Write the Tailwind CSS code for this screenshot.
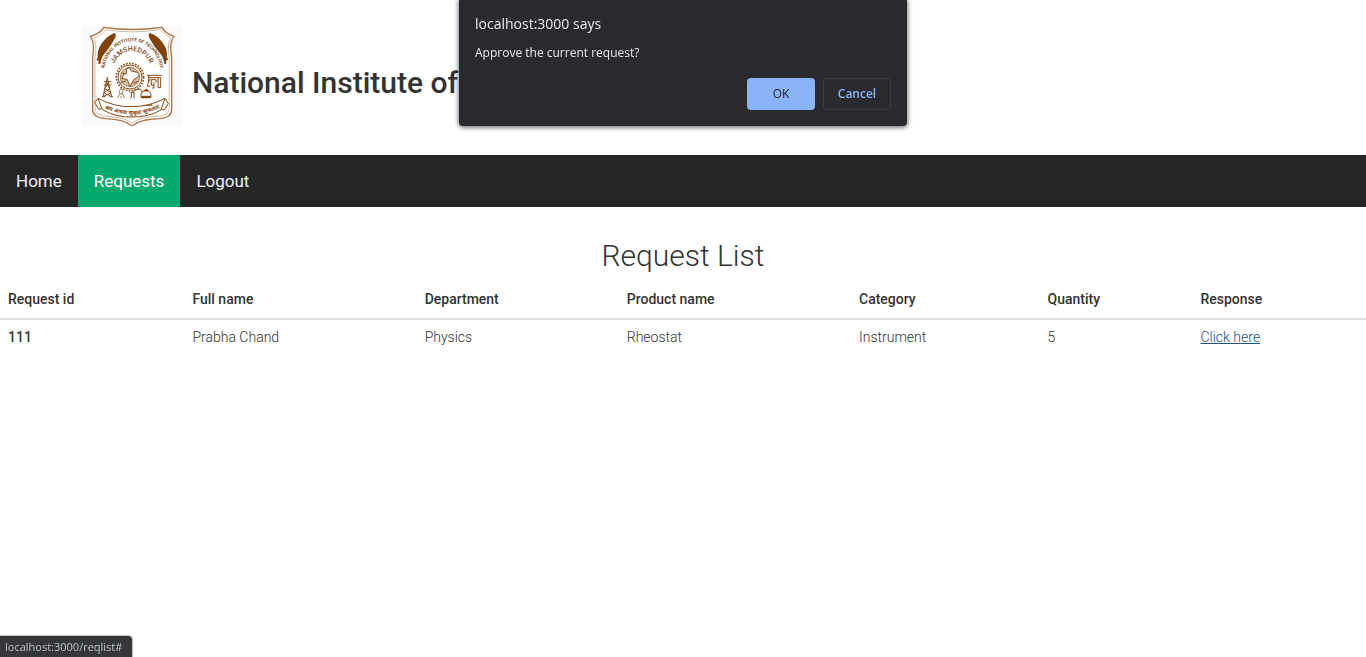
<!DOCTYPE html>
<html lang="en">
<head>
<meta charset="utf-8">
<meta name="viewport" content="width=device-width, initial-scale=1">
<title>Request List</title>
<script src="https://cdn.jsdelivr.net/npm/@tailwindcss/browser@4"></script>
</head>
<body class="min-h-screen bg-white font-['Roboto',sans-serif] text-[#333]">
<header class="flex items-start gap-2.5 pt-[26px] pb-[29px] pl-[82px]">
  <svg class="size-[100px] shrink-0 bg-[#fafafa]" viewBox="18 18 300 300" fill="none" stroke="#8a4b14" role="img" aria-label="National Institute of Technology Jamshedpur">
    <path d="M84 22 Q168 35 258 22 Q267 40 294 49 Q279 66 287 112 L287 270 Q286 293 250 296 Q190 298 168 318 Q146 298 90 296 Q51 293 50 270 L50 112 Q57 66 43 49 Q74 40 84 22Z" fill="#fff" stroke="#aa7548" stroke-width="4"/>
    <path d="M89 29 Q168 42 253 29 Q264 45 284 53 Q273 72 280 112 L280 266 Q279 286 247 289 Q190 291 168 309 Q146 291 93 289 Q58 286 57 266 L57 112 Q64 72 53 53 Q79 45 89 29Z" stroke="#c29a76" stroke-width="2"/>
    <g fill="#84420b" stroke="none">
      <path d="M115 39 Q123 43 116 56 Q104 78 80 108 L75 121 L73 132 L67 131 L68 122 L61 121 L65 112 Q63 91 76 71 Q94 47 115 39Z"/>
      <path d="M222 39 Q214 43 221 56 Q235 81 258 108 L263 120 L265 132 L270 132 L271 121 L277 119 L272 110 Q276 91 262 71 Q246 47 222 39Z"/>
    </g>
    <defs>
      <path id="arcOuter" d="M84 150 C100 35 238 35 254 150"/>
      <path id="arcInner" d="M110 148 C124 75 212 75 226 148"/>
    </defs>
    <g fill="#7b4a24" stroke="none" text-anchor="middle" class="font-['Roboto',sans-serif]">
      <text font-size="14" font-weight="700"><textPath href="#arcOuter" startOffset="50%">NATIONAL INSTITUTE OF TECHNOLOGY</textPath></text>
      <text font-size="21" font-weight="500"><textPath href="#arcInner" startOffset="50%">JAMSHEDPUR</textPath></text>
    </g>
    <circle cx="162" cy="171" r="41" stroke-width="5" stroke-dasharray="5 4"/>
    <circle cx="162" cy="171" r="36" stroke-width="3"/>
    <circle cx="162" cy="171" r="29" fill="#d8bea5" stroke-width="2"/>
    <path d="M151 146 L160 143 L166 153 L184 157 L190 164 L182 174 L174 178 L162 199 L154 179 L138 175 L143 164 L152 158Z" fill="#fff" stroke-width="3"/>
    <path d="M132 190 L149 183 M172 190 L186 184 M137 158 L149 163" stroke-width="3"/>
    <g stroke-width="3">
      <path d="M94 172 L86 207 L81 230 M94 172 L101 207 L107 230 M84 185 H105 M83 195 H106 M90 185 L101 206 L84 218 L104 229 M98 185 L87 206 L105 218 L84 229 M78 230 H88 M101 230 H111"/>
      <path d="M135 205 Q125 216 132 221 Q119 235 130 249 H140 Q151 234 138 221 Q144 214 135 205Z" stroke-width="2"/>
      <path d="M130 222 H140 M129 249 H141 M135 228 V241" stroke-width="2"/>
      <path d="M163 217 H176 M166 218 V231 L156 257 H183 L174 231 V218"/>
      <path d="M160 245 H179 L183 257 H156Z" fill="#84420b"/>
      <path d="M170 215 Q177 207 193 207 L200 219"/>
      <circle cx="210" cy="226" r="15"/>
      <path d="M195 229 H225 Q219 241 210 241 Q200 240 195 229Z M203 213 L212 207 L217 213Z" fill="#84420b"/>
      <path d="M186 256 H230 M202 241 L193 256 M218 241 L227 256"/>
      <path d="M213 166 H257 M216 173 H254 M218 166 V190 M224 176 L216 187 M226 179 H240 V188 M226 179 V196 H234 M246 173 V203 H254 V173 M234 188 V204 H228 M215 191 V199 H222"/>
    </g>
    <path d="M66 235 L56 247 L68 268 L78 264 M66 235 Q116 262 168 260 Q220 260 267 235 L277 251 L264 270 L255 267 M66 235 L79 269 Q122 293 168 291 Q216 292 255 270 L267 235" fill="#fff" stroke-width="3"/>
    <path id="motto" d="M76 261 Q125 284 168 284 Q214 284 262 259" stroke="none"/>
    <text fill="#84420b" stroke="none" text-anchor="middle" font-size="17" font-weight="700" class="font-['Noto_Sans',sans-serif]"><textPath href="#motto" startOffset="50%">श्रम अभवः सुकृतः सुफलतः</textPath></text>
  </svg>
  <h1 class="pt-10 text-[30px] leading-[33px] font-medium">National Institute of Technology</h1>
</header>

<nav class="flex bg-[#262626] text-[17px] leading-6 text-[#f2f2f2]" aria-label="Main">
  <a href="#home" class="px-4 py-3.5">Home</a>
  <a href="#requests" class="bg-[#04aa6d] px-4 py-3.5 text-white" aria-current="page">Requests</a>
  <a href="#logout" class="px-4 py-3.5">Logout</a>
</nav>

<main class="pt-[33px]">
  <h2 class="mb-[9px] text-center text-[30px] leading-8 font-light">Request List</h2>
  <table class="w-full table-fixed border-collapse text-left text-sm leading-5 font-light">
    <colgroup>
      <col class="w-[13.5%]"><col class="w-[17%]"><col class="w-[14.8%]"><col class="w-[17%]"><col class="w-[13.8%]"><col class="w-[11.2%]"><col class="w-[12.7%]">
    </colgroup>
    <thead>
      <tr class="border-b-2 border-[#ddd]">
        <th scope="col" class="px-2 pt-2 pb-[9px] font-medium">Request id</th>
        <th scope="col" class="px-2 pt-2 pb-[9px] font-medium">Full name</th>
        <th scope="col" class="px-2 pt-2 pb-[9px] font-medium">Department</th>
        <th scope="col" class="px-2 pt-2 pb-[9px] font-medium">Product name</th>
        <th scope="col" class="px-2 pt-2 pb-[9px] font-medium">Category</th>
        <th scope="col" class="px-2 pt-2 pb-[9px] font-medium">Quantity</th>
        <th scope="col" class="px-2 pt-2 pb-[9px] font-medium">Response</th>
      </tr>
    </thead>
    <tbody>
      <tr>
        <th scope="row" class="px-2 pt-[7px] pb-2 font-medium">111</th>
        <td class="px-2 pt-[7px] pb-2">Prabha Chand</td>
        <td class="px-2 pt-[7px] pb-2">Physics</td>
        <td class="px-2 pt-[7px] pb-2">Rheostat</td>
        <td class="px-2 pt-[7px] pb-2">Instrument</td>
        <td class="px-2 pt-[7px] pb-2">5</td>
        <td class="px-2 pt-[7px] pb-2"><a href="#" class="text-[#23527c] underline">Click here</a></td>
      </tr>
    </tbody>
  </table>
</main>

<div role="dialog" aria-labelledby="dialog-title" aria-describedby="dialog-text" class="fixed top-0 left-1/2 w-[448px] -translate-x-1/2 rounded-b bg-[#292a2d] px-4 pt-3 pb-4 font-['Open_Sans',sans-serif] text-[#e8eaed] shadow-[0_1px_4px_1px_rgba(0,0,0,0.5)]">
  <h2 id="dialog-title" class="text-sm leading-6">localhost:3000 says</h2>
  <p id="dialog-text" class="mt-[7px] text-xs leading-5">Approve the current request?</p>
  <div class="mt-[15px] flex justify-end gap-2 text-xs">
    <button type="button" class="h-8 w-[68px] rounded bg-[#8ab4f8] font-medium text-[#202124]">OK</button>
    <button type="button" class="h-8 w-[68px] rounded border border-[#3c4043] font-semibold text-[#8ab4f8]">Cancel</button>
  </div>
</div>

<div role="status" class="fixed bottom-0 left-0 rounded-tr-sm bg-[#35363a] pt-0.5 pr-2.5 pb-px pl-[5px] font-['Open_Sans',sans-serif] text-[11px] leading-[18px] text-[#bdc1c6] shadow-[0_0_1px_1px_rgba(0,0,0,0.25)]">localhost:3000/reqlist#</div>
</body>
</html>
